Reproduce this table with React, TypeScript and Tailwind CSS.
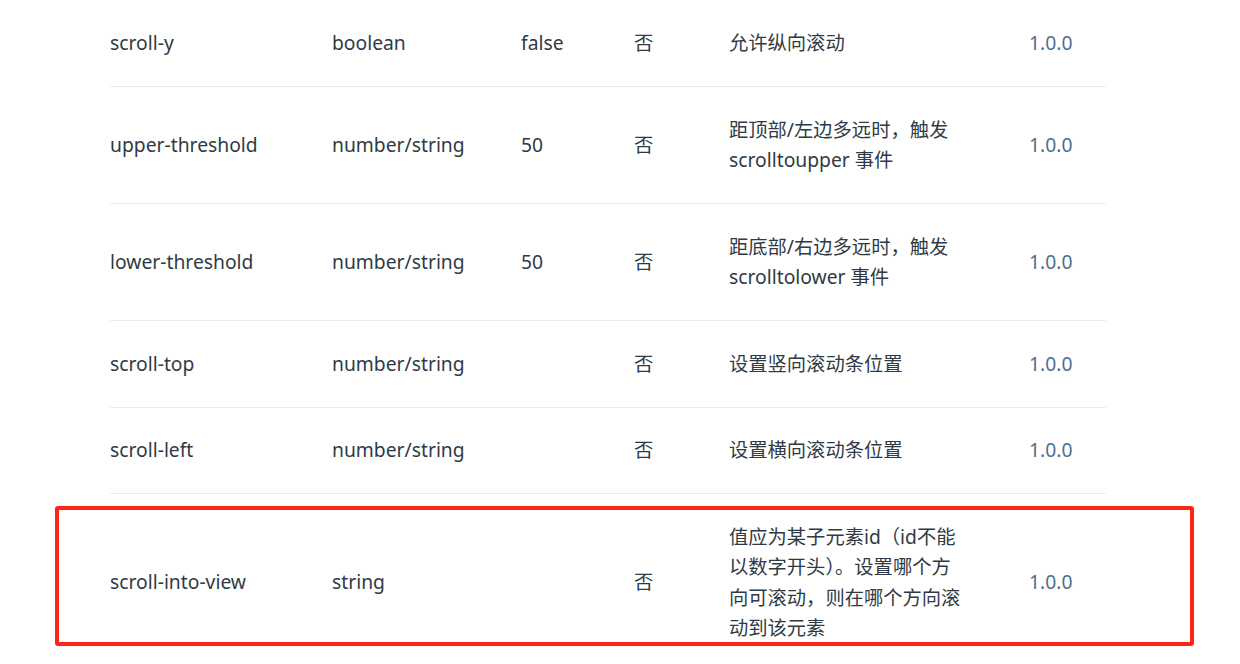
import React from "react";

type Row = { name: string; type: string; def: string; req: string; desc: string; ver: string };

const rows: Row[] = [
  { name: "scroll-y", type: "boolean", def: "false", req: "否", desc: "允许纵向滚动", ver: "1.0.0" },
  { name: "upper-threshold", type: "number/string", def: "50", req: "否", desc: "距顶部/左边多远时，触发 scrolltoupper 事件", ver: "1.0.0" },
  { name: "lower-threshold", type: "number/string", def: "50", req: "否", desc: "距底部/右边多远时，触发 scrolltolower 事件", ver: "1.0.0" },
  { name: "scroll-top", type: "number/string", def: "", req: "否", desc: "设置竖向滚动条位置", ver: "1.0.0" },
  { name: "scroll-left", type: "number/string", def: "", req: "否", desc: "设置横向滚动条位置", ver: "1.0.0" },
  { name: "scroll-into-view", type: "string", def: "", req: "否", desc: "值应为某子元素id（id不能以数字开头）。设置哪个方向可滚动，则在哪个方向滚动到该元素", ver: "1.0.0" },
];

export default function App() {
  return (
    <div
      className="relative h-[664px] w-[1240px] overflow-hidden bg-white text-[#2f3a45]"
      style={{ fontFamily: '"Noto Sans", "Noto Sans CJK SC", sans-serif' }}
    >
      <div className="mt-[0.5px] ml-[110px] w-[996px] text-[19.3px] leading-[30.5px]">
        {rows.map((r, i) => (
          <div
            key={r.name}
            className={
              "grid grid-cols-[222px_189px_113px_95px_301px_76px] items-center py-[27.5px] " +
              (i < rows.length - 1 ? "border-b border-[#eaecef]" : "")
            }
          >
            <div>{r.name}</div>
            <div>{r.type}</div>
            <div>{r.def}</div>
            <div>{r.req}</div>
            <div className="w-[237px]">{r.desc}</div>
            <div className="-ml-px text-[#4e6e8e]">{r.ver}</div>
          </div>
        ))}
      </div>
      <div className="pointer-events-none absolute left-[55px] top-[506px] h-[140px] w-[1139px] rounded-[3px] border-[4px] border-[#ff2418]" />
    </div>
  );
}
